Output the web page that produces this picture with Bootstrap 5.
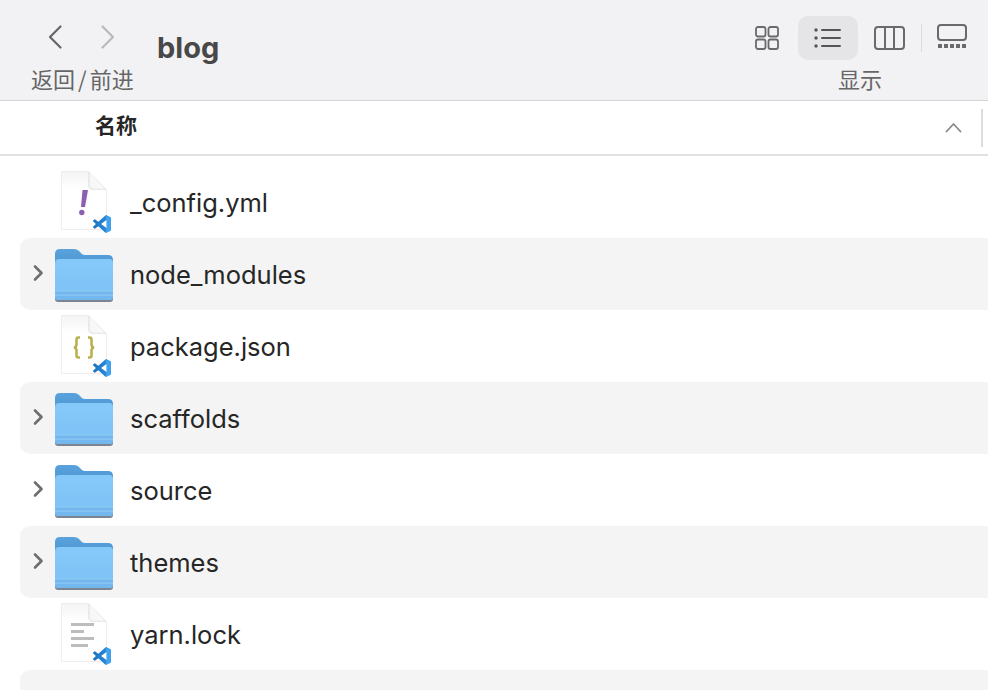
<!doctype html>
<html lang="zh">

<head>
    <meta charset="utf-8">
    <meta name="viewport" content="width=device-width, initial-scale=1">
    <title>blog</title>
    <link href="https://cdn.jsdelivr.net/npm/bootstrap@5.3.3/dist/css/bootstrap.min.css" rel="stylesheet">
    <style>
        html, body {
            height: 100%;
        }

        body {
            background: #fff;
            overflow: hidden;
            font-family: Inter, "Noto Sans CJK SC", sans-serif;
        }

        .finder-toolbar {
            height: 101px;
            background: #f2f2f5;
            border-bottom: 1px solid #d4d4d6;
            padding-left: 31px;
            padding-right: 21px;
        }

        .nav-group {
            width: 102px;
            margin-right: 24px;
        }

        .nav-arrows {
            height: 64px;
            padding: 24px 0 0 16px;
            gap: 37px;
        }

        .tool-label {
            font-size: 22px;
            line-height: 30px;
            margin-top: -1px;
            color: #666;
            white-space: nowrap;
            font-family: "Noto Sans CJK SC", sans-serif;
        }

        .nav-slash {
            margin: 0 3px;
        }

        .folder-title {
            font-size: 29px;
            line-height: 36px;
            font-weight: 700;
            color: #484848;
            padding-top: 30px;
        }

        .view-group {
            width: 212px;
        }

        .view-icons {
            height: 64px;
            padding-top: 16px;
        }

        .view-btn {
            flex: none;
            width: 60px;
            height: 44px;
            border-radius: 10px;
        }

        .view-btn.is-grid {
            width: 43px;
        }

        .view-btn.is-columns {
            width: 63px;
        }

        .view-btn.is-active {
            background: #e5e5e7;
        }

        .view-sep {
            flex: none;
            width: 1px;
            height: 28px;
            background: #dcdcde;
            margin-right: 15px;
        }

        .view-label {
            padding-left: 83px;
        }

        .finder-header {
            height: 55px;
            border-bottom: 2px solid #e2e2e2;
            padding-left: 95px;
            padding-right: 5px;
        }

        .head-name {
            font-size: 21px;
            font-weight: 700;
            color: #262626;
            font-family: "Noto Sans CJK SC", sans-serif;
            padding-bottom: 6px;
        }

        .head-sep {
            width: 2px;
            height: 38px;
            background: #dedede;
            margin-left: 19px;
        }

        .file-list {
            padding-top: 10px;
            padding-left: 20px;
        }

        .file-row {
            height: 72px;
            border-radius: 10px 0 0 10px;
            color: #262626;
            font-size: 25.500px;
        }

        .file-row.is-striped {
            background: #f4f4f4;
        }

        .file-row.is-last {
            height: 20px;
            border-radius: 10px 0 0 0;
        }

        .row-arrow {
            width: 34px;
            padding-left: 13px;
            padding-bottom: 2px;
        }

        .row-icon {
            width: 76px;
        }

        .page-sheet {
            margin-left: 6px;
        }

        .page-mark {
            top: 0;
            left: 0;
        }

        .page-badge {
            left: 39px;
            top: 45px;
        }

        .file-name {
            line-height: 1;
            padding-top: 2px;
        }

        svg {
            display: block;
            flex: none;
        }
    </style>
</head>

<body>
    <svg width="0" height="0" class="position-absolute">
        <defs>
            <linearGradient id="tabBlue" x1="0" y1="0" x2="0" y2="1">
                <stop offset="0" stop-color="#5aa2dc" />
                <stop offset="1" stop-color="#3a85c6" />
            </linearGradient>
            <linearGradient id="frontBlue" x1="0" y1="0" x2="0" y2="1">
                <stop offset="0" stop-color="#86c9f9" />
                <stop offset="1" stop-color="#7cc1f6" />
            </linearGradient>
            <linearGradient id="paper" x1="0" y1="0" x2="0" y2="1">
                <stop offset="0" stop-color="#f4f4f4" />
                <stop offset="0.3" stop-color="#fff" />
            </linearGradient>
            <linearGradient id="codeBlue" x1="0" y1="0" x2="1" y2="0">
                <stop offset="0" stop-color="#1f72bd" />
                <stop offset="0.7" stop-color="#2b86d6" />
                <stop offset="0.75" stop-color="#3fa2ee" />
                <stop offset="1" stop-color="#3fa2ee" />
            </linearGradient>
            <symbol id="folder" viewBox="0 0 60 56">
                <path d="M1 8q0-5 5-5h14q3 0 5 2l3 3q1 1 3 1h23q5 0 5 5v30H1z" fill="url(#tabBlue)" />
                <rect x="1" y="46" width="58" height="10" rx="3" fill="#7a8590" />
                <path d="M1 17q0-4 4-4h50q4 0 4 4v34q0 3-3 3H4q-3 0-3-3z" fill="url(#frontBlue)" />
                <path d="M1 45h58v6q0 3-3 3H4q-3 0-3-3z" fill="#74b6ee" />
                <path d="M1 45h58M1 49h58" stroke="#93cdf7" stroke-width="1" />
            </symbol>
            <symbol id="page" viewBox="0 0 52 64">
                <path d="M1.500 1.500h27l18 18v40h-45z" fill="url(#paper)" stroke="#eee" />
                <path d="M28.500 1.500v13q0 5 5 5h13z" fill="#ececec" stroke="#e8e8e8" />
                <path d="M30 3l15 15.500h-11q-4 0-4-4z" fill="#f8f8f8" />
            </symbol>
            <symbol id="vscode" viewBox="0 0 100 100">
                <path fill="url(#codeBlue)" fill-rule="evenodd" d="M70.900 99.300c1.600.6 3.400.6 5-.2l20.600-9.900c2.100-1 3.500-3.200 3.500-5.600V16.400c0-2.400-1.400-4.600-3.500-5.600L75.900.9c-2.100-1-4.600-.8-6.400.5-.3.2-.5.400-.7.700L29.400 38 12.200 25c-1.600-1.200-3.800-1.100-5.300.2l-5.500 5c-1.800 1.700-1.800 4.500 0 6.200L16.200 50 1.400 63.600c-1.800 1.700-1.800 4.500 0 6.200l5.500 5c1.500 1.300 3.700 1.400 5.300.2l17.200-13 39.400 36c.6.600 1.300 1 2.100 1.300zM75 27.300 45.100 50 75 72.700z" />
            </symbol>
        </defs>
    </svg>

    <div class="finder-toolbar d-flex">
        <div class="nav-group">
            <div class="nav-arrows d-flex align-items-start">
                <svg width="16" height="26" viewBox="0 0 16 26" fill="none" stroke="#666" stroke-width="2.200" stroke-linecap="round" stroke-linejoin="round">
                    <path d="M13.500 2.500L3 13l10.500 10.500" />
                </svg>
                <svg width="16" height="26" viewBox="0 0 16 26" fill="none" stroke="#b9b9bb" stroke-width="2.200" stroke-linecap="round" stroke-linejoin="round">
                    <path d="M2.500 2.500L13 13 2.500 23.500" />
                </svg>
            </div>
            <div class="tool-label">返回<span class="nav-slash">/</span>前进</div>
        </div>
        <div class="folder-title">blog</div>

        <div class="view-group ms-auto">
            <div class="view-icons d-flex align-items-start">
                <div class="view-btn is-grid d-flex align-items-center justify-content-start">
                    <svg width="24" height="24" viewBox="0 0 24 24" fill="none" stroke="#6a6a6c" stroke-width="1.800">
                        <rect x="1" y="1" width="9.500" height="9.500" rx="2" />
                        <rect x="13.500" y="1" width="9.500" height="9.500" rx="2" />
                        <rect x="1" y="13.500" width="9.500" height="9.500" rx="2" />
                        <rect x="13.500" y="13.500" width="9.500" height="9.500" rx="2" />
                    </svg>
                </div>
                <div class="view-btn is-active d-flex align-items-center justify-content-center">
                    <svg width="28" height="22" viewBox="0 0 28 22" fill="#555">
                        <circle cx="2" cy="3" r="1.700" />
                        <circle cx="2" cy="11" r="1.700" />
                        <circle cx="2" cy="19" r="1.700" />
                        <rect x="7" y="2" width="20" height="2" rx="1" />
                        <rect x="7" y="10" width="20" height="2" rx="1" />
                        <rect x="7" y="18" width="20" height="2" rx="1" />
                    </svg>
                </div>
                <div class="view-btn is-columns d-flex align-items-center justify-content-center">
                    <svg width="31" height="24" viewBox="0 0 31 24" fill="none" stroke="#6a6a6c" stroke-width="2">
                        <rect x="1" y="1" width="29" height="22" rx="3" />
                        <path d="M11 1v22M20 1v22" />
                    </svg>
                </div>
                <div class="view-sep mt-2"></div>
                <svg class="mt-2" width="30" height="25" viewBox="0 0 30 25" fill="none" stroke="#6a6a6c" stroke-width="2">
                    <rect x="1" y="1" width="28" height="15" rx="3" />
                    <path d="M1 22h4M7 22h4M13 22h4M19 22h4M25 22h4" stroke-width="4" />
                </svg>
            </div>
            <div class="tool-label view-label">显示</div>
        </div>
    </div>

    <div class="finder-header d-flex align-items-center">
        <div class="head-name me-auto">名称</div>
        <svg width="17" height="11" viewBox="0 0 17 11" fill="none" stroke="#888" stroke-width="1.800" stroke-linecap="round" stroke-linejoin="round">
            <path d="M1.500 9.500L8.500 2l7 7.500" />
        </svg>
        <div class="head-sep"></div>
    </div>

    <div class="file-list">
        <div class="file-row d-flex align-items-center">
            <div class="row-arrow"></div>
            <div class="row-icon position-relative">
                <svg width="52" height="64" class="page-sheet"><use href="#page" /></svg>
                <svg class="page-mark position-absolute" width="52" height="64" viewBox="0 0 52 64" fill="#8c5fb0">
                    <path d="M28.500 20h5.500l-3 17h-4z" />
                    <circle cx="27.800" cy="42.500" r="2.700" />
                </svg>
                <svg class="page-badge position-absolute" width="18" height="18"><use href="#vscode" /></svg>
            </div>
            <div class="file-name">_config.yml</div>
        </div>

        <div class="file-row is-striped d-flex align-items-center">
            <div class="row-arrow">
                <svg width="11" height="18" viewBox="0 0 11 18" fill="none" stroke="#6e6e6e" stroke-width="2.600" stroke-linecap="round" stroke-linejoin="round">
                    <path d="M2 2.500L8.500 9 2 15.500" />
                </svg>
            </div>
            <div class="row-icon"><svg width="60" height="56"><use href="#folder" /></svg></div>
            <div class="file-name">node_modules</div>
        </div>

        <div class="file-row d-flex align-items-center">
            <div class="row-arrow"></div>
            <div class="row-icon position-relative">
                <svg width="52" height="64" class="page-sheet"><use href="#page" /></svg>
                <svg class="page-mark position-absolute" width="52" height="64" viewBox="0 0 52 64" fill="none" stroke="#b8b24e" stroke-width="2.600">
                    <path d="M26 23.500h-1.500q-2 0-2 2v5q0 2.500-2.500 3 2.500.5 2.500 3v5q0 2 2 2H26" />
                    <path d="M34 23.500h1.500q2 0 2 2v5q0 2.500 2.500 3-2.500.5-2.500 3v5q0 2-2 2H34" />
                </svg>
                <svg class="page-badge position-absolute" width="18" height="18"><use href="#vscode" /></svg>
            </div>
            <div class="file-name">package.json</div>
        </div>

        <div class="file-row is-striped d-flex align-items-center">
            <div class="row-arrow">
                <svg width="11" height="18" viewBox="0 0 11 18" fill="none" stroke="#6e6e6e" stroke-width="2.600" stroke-linecap="round" stroke-linejoin="round">
                    <path d="M2 2.500L8.500 9 2 15.500" />
                </svg>
            </div>
            <div class="row-icon"><svg width="60" height="56"><use href="#folder" /></svg></div>
            <div class="file-name">scaffolds</div>
        </div>

        <div class="file-row d-flex align-items-center">
            <div class="row-arrow">
                <svg width="11" height="18" viewBox="0 0 11 18" fill="none" stroke="#6e6e6e" stroke-width="2.600" stroke-linecap="round" stroke-linejoin="round">
                    <path d="M2 2.500L8.500 9 2 15.500" />
                </svg>
            </div>
            <div class="row-icon"><svg width="60" height="56"><use href="#folder" /></svg></div>
            <div class="file-name">source</div>
        </div>

        <div class="file-row is-striped d-flex align-items-center">
            <div class="row-arrow">
                <svg width="11" height="18" viewBox="0 0 11 18" fill="none" stroke="#6e6e6e" stroke-width="2.600" stroke-linecap="round" stroke-linejoin="round">
                    <path d="M2 2.500L8.500 9 2 15.500" />
                </svg>
            </div>
            <div class="row-icon"><svg width="60" height="56"><use href="#folder" /></svg></div>
            <div class="file-name">themes</div>
        </div>

        <div class="file-row d-flex align-items-center">
            <div class="row-arrow"></div>
            <div class="row-icon position-relative">
                <svg width="52" height="64" class="page-sheet"><use href="#page" /></svg>
                <svg class="page-mark position-absolute" width="52" height="64" viewBox="0 0 52 64" fill="#bdbdbd">
                    <rect x="17" y="21" width="23" height="3" />
                    <rect x="17" y="28" width="13" height="3" />
                    <rect x="17" y="35" width="23" height="3" />
                    <rect x="17" y="42" width="17" height="3" />
                </svg>
                <svg class="page-badge position-absolute" width="18" height="18"><use href="#vscode" /></svg>
            </div>
            <div class="file-name">yarn.lock</div>
        </div>

        <div class="file-row is-striped is-last"></div>
    </div>

    <script src="https://cdn.jsdelivr.net/npm/bootstrap@5.3.3/dist/js/bootstrap.bundle.min.js"></script>
</body>

</html>
